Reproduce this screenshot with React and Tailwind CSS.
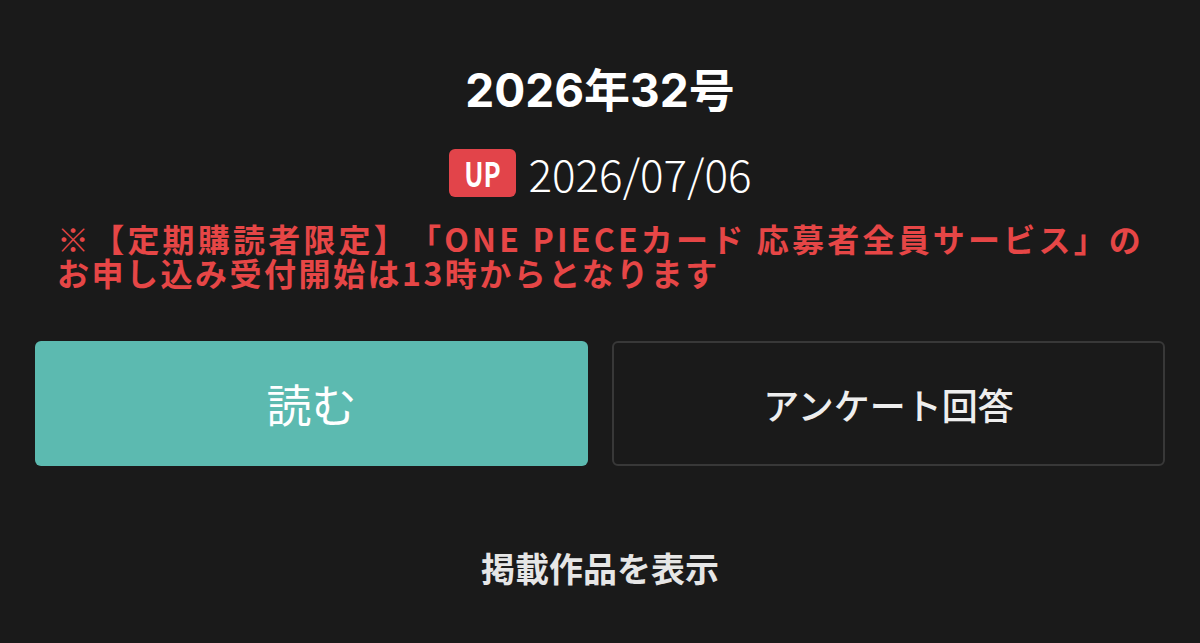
import React from 'react';

const jp = { fontFamily: '"Noto Sans CJK JP", "Noto Sans", sans-serif' };
const latinFirst = { fontFamily: 'Inter, "Noto Sans CJK JP", sans-serif' };

const IssueHeader = () => (
  <div className="flex flex-col items-center">
    <h1 className="text-[46px] font-bold leading-[53px] text-white" style={latinFirst}>
      2026年32号
    </h1>
    <div className="mt-8 flex items-center gap-[13px]">
      <span className="flex h-12 w-[67px] items-center justify-center rounded-md bg-[#e2444a]">
        <span className="inline-block scale-x-[0.78] text-[33px] font-bold leading-none text-white">UP</span>
      </span>
      <span className="text-[44px] font-light leading-none text-white">2026/07/06</span>
    </div>
  </div>
);

// announcement banner, two fixed lines
const Notice = () => (
  <div className="mt-6 whitespace-nowrap px-[57px] text-[32px] font-bold leading-[34px] text-[#e64646] [text-spacing-trim:space-all]">
    <div className="tracking-[3.2px]">※【定期購読者限定】「ONE PIECEカード 応募者全員サービス」の</div>
    <div className="tracking-[2.5px]">お申し込み受付開始は13時からとなります</div>
  </div>
);

const Actions = () => (
  <div className="mt-[52px] grid grid-cols-2 gap-6 px-[35px]">
    <button className="flex h-[125px] items-center justify-center rounded-md bg-[#5cbab0] text-[45px] text-white">
      読む
    </button>
    <button className="flex h-[125px] items-center justify-center rounded-md border-2 border-[#383838] text-[36px] font-medium text-[#eeeeee]">
      アンケート回答
    </button>
  </div>
);

export default function App() {
  return (
    <div className="h-[643px] w-[1200px] overflow-hidden bg-[#1a1a1a] pt-16" style={jp}>
      <IssueHeader />
      <Notice />
      <Actions />
      <div className="mt-[76px] text-center text-[34px] font-semibold text-[#e6e6e6]">掲載作品を表示</div>
    </div>
  );
}
